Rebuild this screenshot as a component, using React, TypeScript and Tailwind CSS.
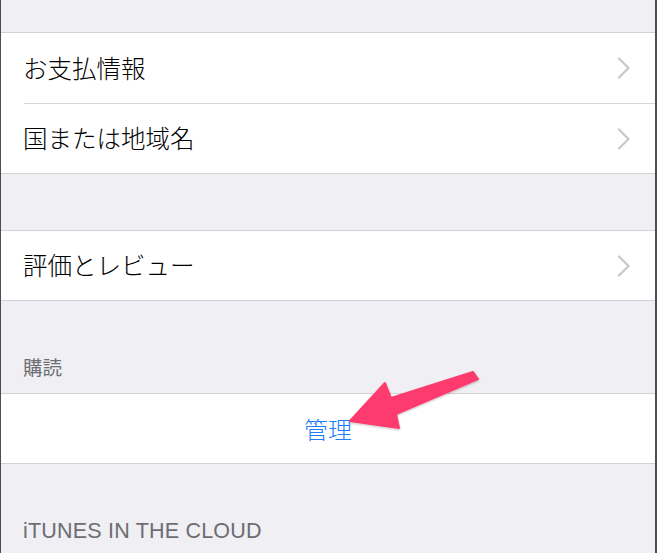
import React from "react";

const jp = { fontFamily: '"Noto Sans CJK JP", "Noto Sans", sans-serif' };

function Chevron() {
  return (
    <svg width="14" height="22" viewBox="0 0 14 22" className="shrink-0">
      <path d="M2 1.5 L11.5 11 L2 20.5" fill="none" stroke="#c7c7cc" strokeWidth="2.2" strokeLinecap="round" strokeLinejoin="round" />
    </svg>
  );
}

function Row({ label, inset, tall }: { label: string; inset?: boolean; tall?: boolean }) {
  return (
    <div className="bg-white">
      <div className={(tall ? "h-[70px]" : "h-[69px]") + " flex items-center justify-between pl-[22px] pr-[24px]"}>
        <span className="text-[24.5px] text-black font-light leading-none" style={jp}>{label}</span>
        <Chevron />
      </div>
      {inset ? <div className="ml-[23px] h-px bg-[#d6d6da]" /> : null}
    </div>
  );
}

const Line = () => <div className="h-px bg-[#d2d2d6]" />;

export default function App() {
  return (
    <div className="relative w-[657px] h-[553px] overflow-hidden bg-[#efeff4] border-l border-r-2 border-[#4d4d4d]" style={jp}>
      <div className="h-[32px]" />
      <Line />
      <Row label="お支払情報" inset tall />
      <Row label="国または地域名" />
      <Line />
      <div className="h-[56px]" />
      <Line />
      <Row label="評価とレビュー" />
      <Line />
      <div className="h-[92px] flex items-end pl-[22px] pb-[17px]">
        <span className="text-[19.5px] text-[#6d6d72] leading-none" style={jp}>購読</span>
      </div>
      <Line />
      <div className="h-[69px] bg-white flex items-center justify-center">
        <span className="text-[24px] text-[#1a7ff8] font-light leading-none" style={jp}>管理</span>
      </div>
      <Line />
      <div className="h-[89px] flex items-end pl-[22px] pb-[11px]">
        <span className="text-[21.5px] text-[#6d6d72] leading-none tracking-[0.2px]" style={{ fontFamily: '"Liberation Sans", Arial, sans-serif' }}>iTUNES IN THE CLOUD</span>
      </div>

      <svg className="absolute left-0 top-0 pointer-events-none" width="657" height="553" viewBox="0 0 657 553">
        <defs>
          <filter id="sh" x="-20%" y="-20%" width="140%" height="140%">
            <feDropShadow dx="0" dy="1" stdDeviation="1.2" floodColor="#000" floodOpacity="0.25" />
          </filter>
        </defs>
        <polygon
          points="349,421 384,383 390,398 472,372 477,379 395,414 398,428"
          fill="#fd3a6e"
          stroke="#fd3a6e"
          strokeWidth="2"
          strokeLinejoin="round"
          filter="url(#sh)"
        />
      </svg>
    </div>
  );
}
